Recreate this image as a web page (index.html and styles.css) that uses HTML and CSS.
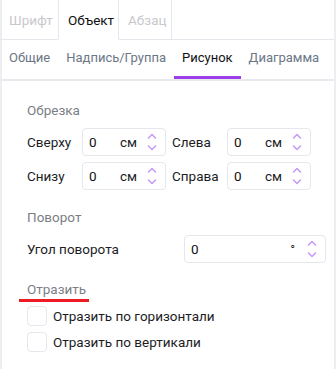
FILE: index.html
```html
<!DOCTYPE html>
<html lang="ru">
<head>
<meta charset="utf-8">
<link rel="stylesheet" href="styles.css">
</head>
<body>
<div class="panel">
  <div class="tabs">
    <div class="tab first">Шрифт</div>
    <div class="tab active">Объект</div>
    <div class="tab last">Абзац</div>
    <div class="tab-fill"></div>
  </div>
  <div class="subtabs">
    <div class="subtab">Общие</div>
    <div class="subtab">Надпись/Группа</div>
    <div class="subtab active">Рисунок</div>
    <div class="subtab">Диаграмма</div>
  </div>
  <div class="content">
    <div class="section-title">Обрезка</div>
    <div class="crop-grid">
      <div class="label">Сверху</div>
      <div class="spin"><span class="val">0</span><span class="unit">см</span><span class="arrows"><svg viewBox="0 0 10 22" width="10" height="22"><path d="M1.5 7 L5 3.5 L8.5 7 M1.5 15 L5 18.5 L8.5 15" fill="none" stroke="#c79cf4" stroke-width="1.6" stroke-linecap="round" stroke-linejoin="round"/></svg></span></div>
      <div class="label r">Слева</div>
      <div class="spin"><span class="val">0</span><span class="unit">см</span><span class="arrows"><svg viewBox="0 0 10 22" width="10" height="22"><path d="M1.5 7 L5 3.5 L8.5 7 M1.5 15 L5 18.5 L8.5 15" fill="none" stroke="#c79cf4" stroke-width="1.6" stroke-linecap="round" stroke-linejoin="round"/></svg></span></div>
      <div class="label">Снизу</div>
      <div class="spin"><span class="val">0</span><span class="unit">см</span><span class="arrows"><svg viewBox="0 0 10 22" width="10" height="22"><path d="M1.5 7 L5 3.5 L8.5 7 M1.5 15 L5 18.5 L8.5 15" fill="none" stroke="#c79cf4" stroke-width="1.6" stroke-linecap="round" stroke-linejoin="round"/></svg></span></div>
      <div class="label r">Справа</div>
      <div class="spin"><span class="val">0</span><span class="unit">см</span><span class="arrows"><svg viewBox="0 0 10 22" width="10" height="22"><path d="M1.5 7 L5 3.5 L8.5 7 M1.5 15 L5 18.5 L8.5 15" fill="none" stroke="#c79cf4" stroke-width="1.6" stroke-linecap="round" stroke-linejoin="round"/></svg></span></div>
    </div>
    <div class="section-title rot">Поворот</div>
    <div class="rot-row">
      <div class="label">Угол поворота</div>
      <div class="spin wide"><span class="val">0</span><span class="unit deg">°</span><span class="arrows"><svg viewBox="0 0 10 22" width="10" height="22"><path d="M1.5 7 L5 3.5 L8.5 7 M1.5 15 L5 18.5 L8.5 15" fill="none" stroke="#c79cf4" stroke-width="1.6" stroke-linecap="round" stroke-linejoin="round"/></svg></span></div>
    </div>
    <div class="section-title flip">Отразить</div>
    <label class="check"><span class="box"></span>Отразить по горизонтали</label>
    <label class="check"><span class="box"></span>Отразить по вертикали</label>
  </div>
</div>
</body>
</html>
```
FILE: styles.css
```css
* { box-sizing: border-box; }
html, body { margin: 0; padding: 0; background: #fff; }
body {
  font-family: Roboto, "Noto Sans", sans-serif;
  font-size: 13px;
  color: #1d1d1f;
  white-space: nowrap;
}
.panel {
  width: 336px;
  height: 369px;
  border-left: 2px solid #eceef2;
  border-right: 2px solid #eceef2;
}
.tabs {
  display: flex;
  height: 40px;
  margin-left: -2px;
}
.tab {
  flex: none;
  height: 40px;
  padding: 0 9px;
  line-height: 40px;
  font-size: 13.5px;
  color: #c8c8cc;
  border-bottom: 1px solid #e4e7ec;
}
.tab.first { width: 58px; }
.tab.active {
  color: #111;
  border-left: 1px solid #e4e7ec;
  border-right: 1px solid #e4e7ec;
  border-bottom-color: transparent;
  width: 61px;
}
.tab.last { border-right: 1px solid #e4e7ec; width: 53px; }
.tab-fill { flex: 1; border-bottom: 1px solid #e4e7ec; }
.subtabs {
  display: flex;
  height: 41px;
  border-bottom: 2px solid #e8eaee;
  margin-left: -1px;
}
.subtab {
  flex: none;
  padding: 0 8px;
  line-height: 36px;
  font-size: 13px;
  color: #6b7785;
  border-bottom: 3px solid transparent;
}
.subtab.active {
  color: #111;
  border-bottom-color: #9b3ee8;
}
.content { padding: 19px 0 0 25px; }
.section-title {
  color: #7a7f86;
  font-size: 13.5px;
  line-height: 20px;
}
.crop-grid {
  margin-top: 8px;
  display: grid;
  grid-template-columns: 55px 84px 61px 84px;
  row-gap: 6px;
  align-items: center;
}
.label { color: #1d1d1f; font-size: 13.5px; }
.label.r { padding-left: 6px; }
.spin {
  height: 28px;
  border: 1px solid #e4e7ec;
  border-radius: 4px;
  display: flex;
  align-items: center;
  padding-left: 6px;
  font-size: 13.5px;
}
.val { flex: 1; color: #111; }
.unit { margin-right: 10px; }
.arrows { display: flex; width: 10px; margin-right: 8px; }
.rot { margin-top: 17px; }
.rot-row {
  margin-top: 8px;
  display: flex;
  align-items: center;
  justify-content: space-between;
  padding-right: 8px;
}
.spin.wide { width: 142px; }
.deg { margin-right: 12px; font-size: 13px; }
.flip {
  margin-top: 16px;
  margin-left: -8px;
  padding-left: 8px;
  width: 70px;
  border-bottom: 3px solid #ee1c24;
}
.check {
  display: flex;
  align-items: center;
  margin-top: 4px;
  height: 20px;
  font-size: 13.5px;
}
.check + .check { margin-top: 6px; }
.box {
  width: 20px;
  height: 20px;
  border: 1px solid #e4e7ec;
  border-radius: 4px;
  margin-right: 6px;
}
```
